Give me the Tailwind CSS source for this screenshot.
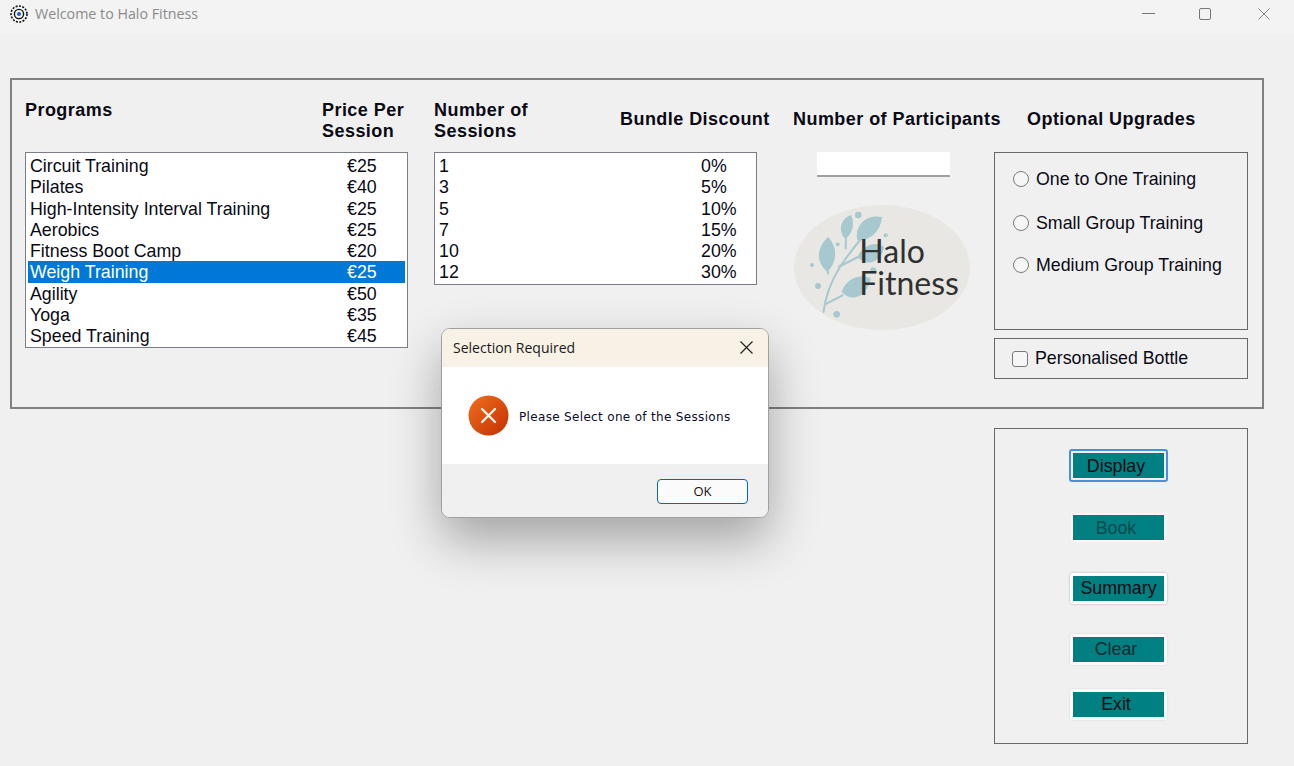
<!DOCTYPE html>
<html lang="en">
<head>
    <meta charset="UTF-8">
    <title>Welcome to Halo Fitness</title>
    <script src="https://cdn.jsdelivr.net/npm/@tailwindcss/browser@4"></script>
</head>
<body class="relative w-[1294px] h-[766px] overflow-hidden bg-[#f0f0f0] font-['Liberation_Sans',sans-serif] text-[17.8px] leading-[21px] text-[#0a0a14]">

    <!-- title bar -->
    <div class="flex items-center h-[34px] pb-[7px] bg-[#f3f3f3]">
        <svg class="ml-[10px] w-[18px] h-[18px]" viewBox="0 0 18 18" fill="none">
            <circle cx="9" cy="9" r="8" stroke="#111" stroke-width="1.6" stroke-dasharray="2 1.4"/>
            <circle cx="9" cy="9" r="4.6" stroke="#111" stroke-width="1.4"/>
            <circle cx="9" cy="9" r="2" fill="#1d5fc4"/>
        </svg>
        <span class="ml-[7px] font-['Open_Sans',sans-serif] text-[14.25px] text-[#8a8a8a]">Welcome to Halo Fitness</span>
        <div class="flex items-center ml-auto mr-[24px]">
            <div class="w-[13px] h-px bg-[#777]"></div>
            <div class="ml-[44px] w-[12px] h-[12px] border border-[#777] rounded-[2px]"></div>
            <svg class="ml-[47px] w-[12px] h-[12px]" viewBox="0 0 13 13" stroke="#777" stroke-width="1"><path d="M.5.5l12 12M12.5.5l-12 12"/></svg>
        </div>
    </div>

    <!-- main panel -->
    <div class="flex items-start ml-[10px] mt-[44px] w-[1254px] h-[331px] border-2 border-[#808080]">
        <!-- programs -->
        <div class="ml-[13px] w-[383px]">
            <div class="flex h-[72px] pt-[20px] font-bold text-[18px] tracking-[0.45px]">
                <div class="w-[297px]">Programs</div>
                <div>Price Per<br>Session</div>
            </div>
            <div class="h-[196px] bg-white border border-[#7d7d88] pt-[3px] px-[2px]">
                <div class="flex h-[21.25px] pl-[2px]"><span class="w-[317px]">Circuit Training</span><span>€25</span></div>
                <div class="flex h-[21.25px] pl-[2px]"><span class="w-[317px]">Pilates</span><span>€40</span></div>
                <div class="flex h-[21.25px] pl-[2px]"><span class="w-[317px]">High-Intensity Interval Training</span><span>€25</span></div>
                <div class="flex h-[21.25px] pl-[2px]"><span class="w-[317px]">Aerobics</span><span>€25</span></div>
                <div class="flex h-[21.25px] pl-[2px]"><span class="w-[317px]">Fitness Boot Camp</span><span>€20</span></div>
                <div class="flex h-[21.25px] -mt-px pt-px mb-px pl-[2px] bg-[#0078d7] text-white"><span class="w-[317px]">Weigh Training</span><span>€25</span></div>
                <div class="flex h-[21.25px] pl-[2px]"><span class="w-[317px]">Agility</span><span>€50</span></div>
                <div class="flex h-[21.25px] pl-[2px]"><span class="w-[317px]">Yoga</span><span>€35</span></div>
                <div class="flex h-[21.25px] pl-[2px]"><span class="w-[317px]">Speed Training</span><span>€45</span></div>
            </div>
        </div>

        <!-- sessions -->
        <div class="ml-[26px] w-[323px]">
            <div class="flex items-start h-[72px] pt-[20px] font-bold text-[18px] tracking-[0.45px]">
                <div class="w-[186px] shrink-0">Number of<br>Sessions</div>
                <div class="mt-[9px] whitespace-nowrap">Bundle Discount</div>
            </div>
            <div class="h-[133px] bg-white border border-[#7d7d88] pt-[3px] pl-[4px]">
                <div class="flex h-[21.25px]"><span class="w-[262px]">1</span><span>0%</span></div>
                <div class="flex h-[21.25px]"><span class="w-[262px]">3</span><span>5%</span></div>
                <div class="flex h-[21.25px]"><span class="w-[262px]">5</span><span>10%</span></div>
                <div class="flex h-[21.25px]"><span class="w-[262px]">7</span><span>15%</span></div>
                <div class="flex h-[21.25px]"><span class="w-[262px]">10</span><span>20%</span></div>
                <div class="flex h-[21.25px]"><span class="w-[262px]">12</span><span>30%</span></div>
            </div>
        </div>

        <!-- participants -->
        <div class="ml-[36px] w-[201px]">
            <div class="h-[72px] pt-[29px] font-bold text-[18px] tracking-[0.45px] whitespace-nowrap">Number of Participants</div>
            <div class="ml-[24px] w-[133px] h-[25px] bg-white border-b-2 border-[#a0a0a0]"></div>
            <svg class="mt-[28px] ml-[1px] w-[176px] h-[125px]" viewBox="42 192 528 375" fill="#a8c8d0">
                <ellipse cx="306" cy="379.500" rx="264" ry="187.500" fill="#e8e7e3"/>
                <path d="M130 515C136 470 150 425 180 378C205 340 225 315 250 285" fill="none" stroke="#a8c8d0" stroke-width="6"/>
                <path d="M135 490L190 462M145 400L138 360M175 378L240 345M197 325L198 280" fill="none" stroke="#a8c8d0" stroke-width="6"/>
                <path d="M144 288C174 318 172 365 142 392C106 365 110 318 144 288Z"/>
                <path d="M213 222C226 250 216 280 196 294C172 270 182 232 213 222Z"/>
                <path d="M306 228C302 272 268 300 232 298C222 250 262 218 306 228Z"/>
                <path d="M233 348C248 310 290 300 312 318C306 360 262 382 233 348Z"/>
                <path d="M185 452C198 412 244 396 272 412C266 458 220 492 185 452Z"/>
                <circle cx="235" cy="222" r="10"/>
                <circle cx="173" cy="310" r="6"/>
                <circle cx="96" cy="372" r="6"/>
                <circle cx="114" cy="435" r="9"/>
                <circle cx="170" cy="520" r="10"/>
                <circle cx="317" cy="283" r="6"/>
                <circle cx="280" cy="388" r="9"/>
                <text x="238" y="367" font-size="96" fill="#303030" class="font-['Lato',sans-serif]">Halo</text>
                <text x="238" y="462" font-size="96" fill="#303030" class="font-['Lato',sans-serif]">Fitness</text>
            </svg>
        </div>

        <!-- upgrades -->
        <div class="w-[254px]">
            <div class="h-[72px] pt-[29px] pl-[33px] font-bold text-[18px] tracking-[0.45px] whitespace-nowrap">Optional Upgrades</div>
            <div class="h-[178px] border border-[#686868] pt-[14px] pl-[18px]">
                <div class="flex items-center h-[24px]"><span class="w-[16px] h-[16px] rounded-full bg-[#f6f6f6] border-[1.5px] border-[#7a7a7a]"></span><span class="ml-[7px]">One to One Training</span></div>
                <div class="flex items-center h-[24px] mt-[20px]"><span class="w-[16px] h-[16px] rounded-full bg-[#f6f6f6] border-[1.5px] border-[#7a7a7a]"></span><span class="ml-[7px]">Small Group Training</span></div>
                <div class="flex items-center h-[24px] mt-[18px]"><span class="w-[16px] h-[16px] rounded-full bg-[#f6f6f6] border-[1.5px] border-[#7a7a7a]"></span><span class="ml-[7px]">Medium Group Training</span></div>
            </div>
            <div class="flex items-center h-[41px] mt-[8px] border border-[#686868] pl-[17px]">
                <span class="w-[16px] h-[16px] rounded-[3px] bg-[#f6f6f6] border-[1.5px] border-[#7a7a7a]"></span><span class="ml-[7px]">Personalised Bottle</span>
            </div>
        </div>
    </div>

    <!-- action buttons -->
    <div class="flex flex-col items-start ml-[994px] mt-[19px] w-[254px] h-[316px] border border-[#686868] pt-[20px] pl-[74px]">
        <button class="w-[99px] h-[33px] border-2 border-[#4a90d9] rounded-[3px] bg-[#f0f0f0] p-[2px]"><span class="block h-[25px] pr-[5px] bg-[#008080] leading-[27px]">Display</span></button>
        <button class="ml-[2px] w-[95px] h-[29px] mt-[31px] border-2 border-[#f8f8f8] rounded-[2px]"><span class="block h-[25px] pr-[5px] bg-[#008080] text-[#0b4a4e] leading-[27px]">Book</span></button>
        <button class="ml-[1px] w-[97px] h-[31px] mt-[31px] border-[3px] border-white rounded-[3px] shadow-[0_0_2px_#999]"><span class="block h-[25px] bg-[#008080] leading-[25px]">Summary</span></button>
        <button class="ml-[1px] w-[97px] h-[31px] mt-[30px] border-[3px] border-[#fafafa] rounded-[3px] shadow-[0_0_2px_#ccc]"><span class="block h-[25px] pr-[5px] bg-[#008080] text-[#0a2a30] leading-[25px]">Clear</span></button>
        <button class="ml-[1px] w-[97px] h-[31px] mt-[24px] border-[3px] border-[#fafafa] rounded-[3px] shadow-[0_0_2px_#ccc]"><span class="block h-[25px] pr-[5px] bg-[#008080] leading-[25px]">Exit</span></button>
    </div>

    <!-- message box -->
    <div class="absolute left-[441px] top-[328px] flex flex-col w-[328px] h-[190px] overflow-hidden rounded-[9px] border border-[#a0a0a0] bg-white shadow-[0_22px_50px_rgba(0,0,0,0.32)] font-['Open_Sans',sans-serif]">
        <div class="flex items-center justify-between h-[38px] pb-[2px] bg-[#f8f1e6] pl-[11px] pr-[15px] text-[14px] text-[#1a1a1a]">
            <span>Selection Required</span>
            <svg class="w-[13px] h-[13px]" viewBox="0 0 13 13" stroke="#222" stroke-width="1.2"><path d="M.5.5l12 12M12.500.5l-12 12"/></svg>
        </div>
        <div class="flex items-center h-[97px] pl-[26px]">
            <svg class="w-[41px] h-[41px]" viewBox="0 0 41 41">
                <defs><linearGradient id="err" x1="0" y1="0" x2="1" y2="1"><stop offset="0" stop-color="#f0701f"/><stop offset="1" stop-color="#c42f00"/></linearGradient></defs>
                <circle cx="20.500" cy="20.500" r="20" fill="url(#err)"/>
                <path d="M14 14l13 13M27 14L14 27" stroke="#fdeee6" stroke-width="2.4" stroke-linecap="round"/>
            </svg>
            <span class="ml-[10px] mt-[3px] font-['DejaVu_Sans',sans-serif] text-[12px] tracking-[0.33px] text-[#0c0c28]">Please Select one of the Sessions</span>
        </div>
        <div class="flex-1 bg-[#f0f0f0] pt-[15px] pl-[215px]">
            <button class="w-[91px] h-[25px] border-[1.5px] border-[#0067c0] rounded-[4px] bg-[#fbfbfb] text-[13px] font-medium text-[#111]">OK</button>
        </div>
    </div>
</body>
</html>
